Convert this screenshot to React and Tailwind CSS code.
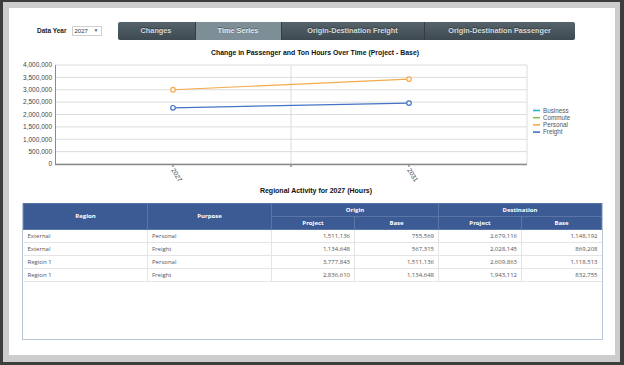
import React from "react";

const tabs = [
  { label: "Changes", w: "w-[77px]" },
  { label: "Time Series", w: "w-[86px]", active: true },
  { label: "Origin-Destination Freight", w: "w-[143px]" },
  { label: "Origin-Destination Passenger", w: "flex-1" },
];

const rows = [
  ["External", "Personal", "1,511,136", "755,569", "2,679,116", "1,148,192"],
  ["External", "Freight", "1,134,648", "567,315", "2,028,145", "869,208"],
  ["Region 1", "Personal", "3,777,843", "1,511,136", "2,609,863", "1,118,513"],
  ["Region 1", "Freight", "2,836,610", "1,134,648", "1,943,112", "832,755"],
];

// y position for a value on the chart (page coordinates)
const yOf = (v) => 164 - (v / 4000000) * 99;

const yTicks = [0, 500000, 1000000, 1500000, 2000000, 2500000, 3000000, 3500000, 4000000];

const series = [
  { name: "Personal", color: "#f5a94a", pts: [3000000, 3430000] },
  { name: "Freight", color: "#4472c4", pts: [2270000, 2460000] },
];

const legend = [
  { name: "Business", color: "#22b5c8" },
  { name: "Commute", color: "#8cc152" },
  { name: "Personal", color: "#f5a94a" },
  { name: "Freight", color: "#4472c4" },
];

const Chart = () => (
  <svg width="606" height="128" className="block" style={{ fontFamily: "'Liberation Sans', Arial, sans-serif" }}>
    <g transform="translate(-9,-58)">
      {/* grid */}
      {yTicks.map((t) => (
        <g key={t}>
          <line x1="55" x2="527" y1={yOf(t)} y2={yOf(t)} stroke="#dcdcdc" strokeWidth="1" />
          <text x="52" y={yOf(t) + 2.3} textAnchor="end" fontSize="6.5" fill="#444">
            {t.toLocaleString("en-US")}
          </text>
        </g>
      ))}
      <line x1="291" x2="291" y1="65" y2="164" stroke="#dcdcdc" />
      <line x1="527" x2="527" y1="65" y2="164" stroke="#dcdcdc" />
      <line x1="55.5" x2="55.5" y1="65" y2="165" stroke="#8a8a8a" />
      <line x1="55" x2="527" y1="164.5" y2="164.5" stroke="#8a8a8a" strokeWidth="1.4" />
      {[173, 291, 409].map((x) => (
        <line key={x} x1={x} x2={x} y1="165" y2="167" stroke="#666" />
      ))}
      {/* x labels */}
      <text x="171" y="170" fontSize="6.5" fill="#444" transform="rotate(58 171 170)">2027</text>
      <text x="407" y="170" fontSize="6.5" fill="#444" transform="rotate(58 407 170)">2031</text>
      {/* series */}
      {series.map((s) => (
        <g key={s.name}>
          <line x1="173" x2="409" y1={yOf(s.pts[0])} y2={yOf(s.pts[1])} stroke={s.color} strokeWidth="1.2" />
          <circle cx="173" cy={yOf(s.pts[0])} r="2.3" fill="#fff" stroke={s.color} strokeWidth="1.2" />
          <circle cx="409" cy={yOf(s.pts[1])} r="2.3" fill="#fff" stroke={s.color} strokeWidth="1.2" />
        </g>
      ))}
      {/* legend */}
      {legend.map((l, i) => (
        <g key={l.name}>
          <line x1="533" x2="540" y1={110.5 + i * 7.2} y2={110.5 + i * 7.2} stroke={l.color} strokeWidth="1.6" />
          <text x="543" y={112.6 + i * 7.2} fontSize="6.3" fill="#555">{l.name}</text>
        </g>
      ))}
    </g>
  </svg>
);

const App = () => {
  return (
    <div className="w-[624px] h-[365px] bg-[#3d3d3d] pt-[2px] pl-[3px] overflow-hidden">
      <div className="w-[617px] h-[360px] bg-[#cdcdcd] pt-[6px] pl-[6px]">
        <div
          className="w-[606px] h-[347px] bg-white"
          style={{ fontFamily: "'Liberation Sans', Arial, sans-serif" }}
        >
          {/* controls */}
          <div className="flex items-center pt-[14px] h-[32px]">
            <span className="ml-[28px] text-[6.5px] font-bold text-[#222]">Data Year</span>
            <div className="ml-[5px] w-[30px] h-[10px] border border-[#d0d0d0] flex items-center justify-between px-[2px] text-[6px] text-[#333]">
              <span>2027</span>
              <span className="text-[5px] text-[#666]">▼</span>
            </div>
            <div className="ml-[16px] w-[457px] h-[18px] flex rounded-[2px] overflow-hidden bg-gradient-to-b from-[#56636b] to-[#3e4a51]">
              {tabs.map((t, i) => (
                <div
                  key={t.label}
                  className={`${t.w} h-full flex items-center justify-center text-[7.3px] font-bold [text-shadow:0_-1px_0_rgba(0,0,0,0.35)] ${
                    t.active ? "bg-[#7d8e97] text-[#e3e8eb]" : "text-[#d4dadd]"
                  } ${i > 0 ? "border-l border-[#333d43]" : ""}`}
                >
                  {t.label}
                </div>
              ))}
            </div>
          </div>

          {/* chart */}
          <div className="mt-[8px] h-[10px] leading-[10px] text-center text-[6.9px] font-bold text-[#111] pl-[6px]">
            Change in Passenger and Ton Hours Over Time (Project - Base)
          </div>
          <Chart />

          {/* table */}
          <div className="h-[10px] leading-[10px] text-center text-[7px] font-bold text-[#111] pl-[8px]">
            Regional Activity for 2027 (Hours)
          </div>
          <div className="mt-[7px] ml-[13px] w-[581px] h-[137px] border border-[#b9c6d6] border-t-0">
            <table
              className="w-full border-collapse table-fixed text-[6px]"
              style={{ fontFamily: "'Open Sans', 'Noto Sans', sans-serif" }}
            >
              <colgroup>
                <col className="w-[124px]" />
                <col className="w-[124px]" />
                <col className="w-[83px]" />
                <col className="w-[84px]" />
                <col className="w-[83px]" />
                <col />
              </colgroup>
              <thead className="bg-[#3c5a94] text-white font-bold">
                <tr className="h-[13px]">
                  <th rowSpan={2} className="border border-[#5b75a6]">Region</th>
                  <th rowSpan={2} className="border border-[#5b75a6]">Purpose</th>
                  <th colSpan={2} className="border border-[#5b75a6]">Origin</th>
                  <th colSpan={2} className="border border-[#5b75a6]">Destination</th>
                </tr>
                <tr className="h-[13px]">
                  <th className="border border-[#5b75a6]">Project</th>
                  <th className="border border-[#5b75a6]">Base</th>
                  <th className="border border-[#5b75a6]">Project</th>
                  <th className="border border-[#5b75a6]">Base</th>
                </tr>
              </thead>
              <tbody className="text-[#555]">
                {rows.map((r, i) => (
                  <tr key={i} className="h-[13px] border-b border-[#e4e4e4]">
                    {r.map((c, j) => (
                      <td
                        key={j}
                        className={`border-r border-[#e4e4e4] last:border-r-0 ${
                          j < 2 ? "text-left pl-[4px]" : "text-right pr-[4px]"
                        }`}
                      >
                        {c}
                      </td>
                    ))}
                  </tr>
                ))}
              </tbody>
            </table>
          </div>
        </div>
      </div>
    </div>
  );
};

export default App;
